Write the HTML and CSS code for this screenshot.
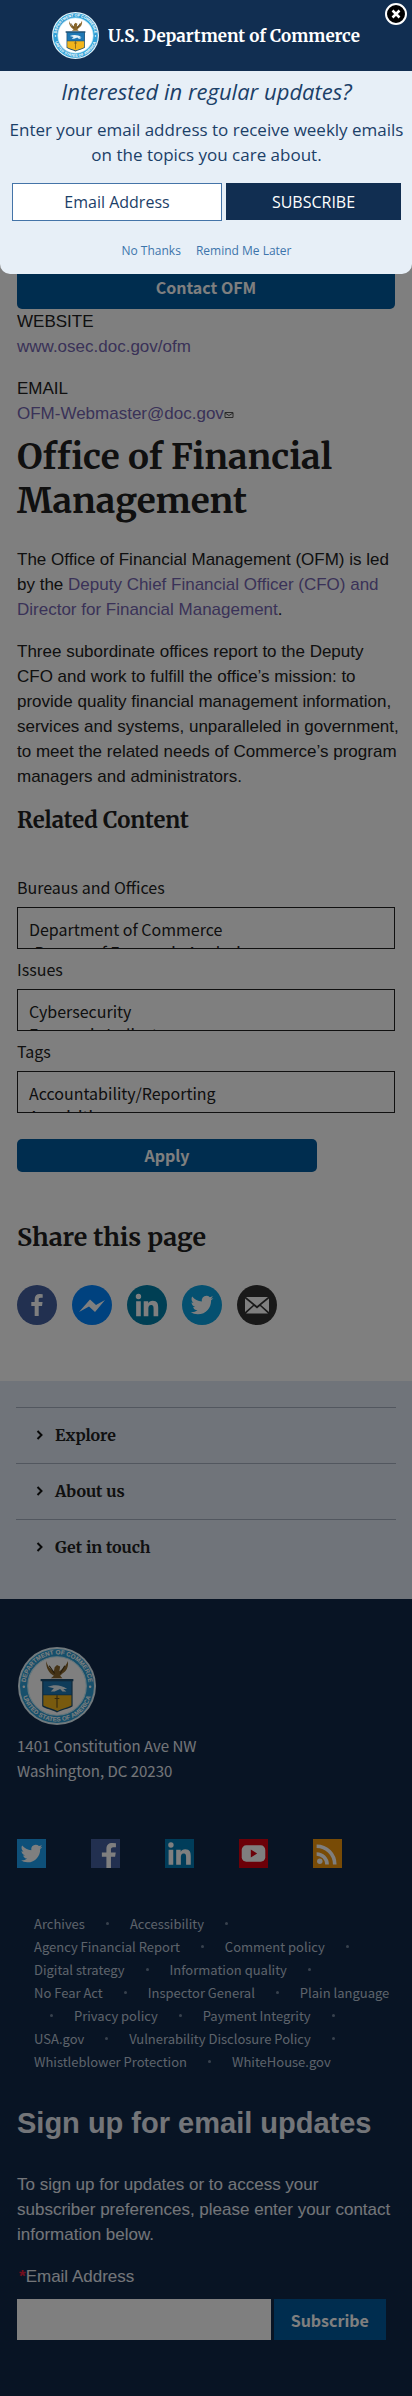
FILE: index.html
```html
<!DOCTYPE html>
<html lang="en">
<head>
<meta charset="utf-8">
<meta name="viewport" content="width=device-width, initial-scale=1">
<title>Office of Financial Management | U.S. Department of Commerce</title>
<link rel="stylesheet" href="styles.css">
</head>
<body>
<svg class="defs" aria-hidden="true">
  <defs>
    <path id="arc-top" d="M9.500 50a40.500 40.500 0 0 1 81 0"/>
    <path id="arc-bottom" d="M4.500 50a45.500 45.500 0 0 0 91 0"/>
    <symbol id="seal" viewBox="0 0 100 100">
      <circle cx="50" cy="50" r="50" fill="#e3f4fb"/>
      <circle cx="50" cy="50" r="47.500" fill="#2f9fd6"/>
      <circle cx="50" cy="50" r="37.500" fill="#fff" stroke="#c9ecf8" stroke-width="1.500"/>
      <text class="seal-text"><textPath href="#arc-top" startOffset="50%">DEPARTMENT OF COMMERCE</textPath></text>
      <text class="seal-text"><textPath href="#arc-bottom" startOffset="50%">UNITED STATES OF AMERICA</textPath></text>
      <circle cx="7.500" cy="51" r="1.600" fill="#fff"/><circle cx="92.500" cy="51" r="1.600" fill="#fff"/>
      <path d="M36 18c3 9 6 11 10 13l1-5 3-3 4 2-1 6c5-3 8-6 11-13 1 8-2 13-7 16l-3 3 3 3H42l4-3c-7-4-10-10-10-19z" fill="#8a672c"/>
      <path d="M40 24l7 10M60 24l-6 10" stroke="#4b3818" stroke-width="1.500"/>
      <path d="M29 41h42v3h-1v32c-5 4-14 4-20 8-6-4-15-4-19-8V44h-2z" fill="#1c4f73"/>
      <path d="M32.500 44h36v17h-36z" fill="#1f78b4"/>
      <path d="M32.500 62h36v13c-5 3-13 4-18 7-5-3-13-4-18-7z" fill="#f1b51c"/>
      <path d="M38 51c8-3 17-3 25 3h-5l4 3h-5l-3-3-7 3h-5l4-4z" fill="#e7f3f8"/>
      <path d="M50 62v16M47 66h6" stroke="#6d541d" stroke-width="1.500"/>
    </symbol>
    <symbol id="twitter" viewBox="0 0 32 32"><path d="M28 8.557a9.913 9.913 0 0 1-2.828.775 4.930 4.930 0 0 0 2.166-2.725 9.738 9.738 0 0 1-3.130 1.194 4.920 4.920 0 0 0-3.593-1.550 4.924 4.924 0 0 0-4.794 6.049c-4.090-.210-7.720-2.170-10.150-5.150a4.942 4.942 0 0 0-.665 2.477c0 1.710.870 3.214 2.190 4.100a4.968 4.968 0 0 1-2.230-.616v.060c0 2.390 1.700 4.380 3.952 4.830a5.051 5.051 0 0 1-2.224.084 4.935 4.935 0 0 0 4.600 3.420A9.893 9.893 0 0 1 4 23.540a13.940 13.940 0 0 0 7.548 2.212c9.057 0 14.010-7.507 14.010-14.013 0-.213-.005-.426-.015-.637.960-.695 1.795-1.560 2.455-2.550z"/></symbol>
    <symbol id="facebook" viewBox="0 0 32 32"><path d="M17.780 27.500V17.008h3.522l.527-4.090h-4.050v-2.610c0-1.182.330-1.990 2.023-1.990h2.166V4.660a29.320 29.320 0 0 0-3.155-.160c-3.123 0-5.260 1.905-5.260 5.405v3.016h-3.530v4.090h3.530V27.500h4.223z"/></symbol>
    <symbol id="linkedin" viewBox="0 0 32 32"><path d="M6.227 12.610h4.190v13.480h-4.190zM8.322 5.900a2.430 2.430 0 1 1 0 4.861 2.430 2.430 0 0 1 0-4.860M13.040 12.610h4.020v1.840h.058c.560-1.058 1.927-2.176 3.965-2.176 4.238 0 5.020 2.792 5.020 6.420v7.395h-4.183v-6.560c0-1.564-.030-3.574-2.178-3.574-2.180 0-2.514 1.700-2.514 3.460v6.668H13.040z"/></symbol>
    <symbol id="rss" viewBox="0 0 32 32"><circle cx="7.500" cy="24.500" r="3"/><path d="M4 16.500A11.500 11.500 0 0 1 15.500 28M4 8A20 20 0 0 1 24 28" fill="none" stroke="#fff" stroke-width="4"/></symbol>
  </defs>
</svg>

<div class="popup" role="dialog" aria-labelledby="popup-title">
  <header class="brand">
    <svg class="brand-seal" role="img" aria-label="Department seal"><use href="#seal"/></svg>
    <span class="brand-name">U.S. Department of Commerce</span>
    <button class="close" type="button" aria-label="Close"><svg viewBox="0 0 10 10"><path d="M1.500 1.500l7 7M8.500 1.500l-7 7"/></svg></button>
  </header>
  <form class="offer">
    <h2 id="popup-title" class="offer-title">Interested in regular updates?</h2>
    <p class="offer-text">Enter your email address to receive weekly emails on the topics you care about.</p>
    <div class="offer-row">
      <input class="offer-input" type="email" placeholder="Email Address" aria-label="Email Address">
      <button class="offer-submit" type="submit">SUBSCRIBE</button>
    </div>
    <div class="offer-links"><a href="#">No Thanks</a><a href="#">Remind Me Later</a></div>
  </form>
</div>

<div class="page">
  <main class="main">
    <a class="button contact" href="#">Contact OFM</a>
    <div class="details">
      <p>WEBSITE<br><a href="#">www.osec.doc.gov/ofm</a></p>
      <p>EMAIL<br><a href="#">OFM-Webmaster@doc.gov<svg class="mail" viewBox="0 0 10 8" aria-hidden="true"><path d="M1 1.500h8v5H1zM1 2l4 2.500L9 2"/></svg></a></p>
    </div>
    <h1 class="title">Office of Financial Management</h1>
    <div class="copy">
      <p>The Office of Financial Management (OFM) is led by the <a href="#">Deputy Chief Financial Officer (CFO) and Director for Financial Management</a>.</p>
      <p>Three subordinate offices report to the Deputy CFO and work to fulfill the office’s mission: to provide quality financial management information, services and systems, unparalleled in government, to meet the related needs of Commerce’s program managers and administrators.</p>
    </div>
    <h2 class="related">Related Content</h2>
    <form class="filters">
      <label for="bureaus">Bureaus and Offices</label>
      <select id="bureaus" multiple>
        <option>Department of Commerce</option>
        <option>-Bureau of Economic Analysis</option>
      </select>
      <label for="issues">Issues</label>
      <select id="issues" multiple>
        <option>Cybersecurity</option>
        <option>Economic Indicators</option>
      </select>
      <label for="tags">Tags</label>
      <select id="tags" multiple>
        <option>Accountability/Reporting</option>
        <option>Acquisition</option>
      </select>
      <button class="button apply" type="submit">Apply</button>
    </form>
    <h2 class="share-title">Share this page</h2>
    <div class="share">
      <a class="facebook" href="#" aria-label="Facebook"><svg viewBox="-5 -5 42 42"><use href="#facebook" width="32" height="32"/></svg></a>
      <a class="messenger" href="#" aria-label="Messenger"><svg viewBox="0 0 40 40"><path d="M7 27l11-12.500 6 5.500 9-5-10 12-6-5.500z"/></svg></a>
      <a class="linkedin" href="#" aria-label="LinkedIn"><svg viewBox="-2 -2 36 36"><use href="#linkedin" width="32" height="32"/></svg></a>
      <a class="twitter" href="#" aria-label="Twitter"><svg viewBox="-5 -5 42 42"><use href="#twitter" width="32" height="32"/></svg></a>
      <a class="email" href="#" aria-label="Email"><svg viewBox="0 0 40 40"><path d="M9 12h22l-11 9zM8 13.500l8 6.500-8 7zM32 13.500L24 20l8 7zM17 21l3 2.500 3-2.500 8 7.500H9z"/></svg></a>
    </div>
  </main>

  <nav class="sections" aria-label="Sections">
    <a href="#"><svg viewBox="0 0 8 12"><path d="M1.500 2l4 4-4 4"/></svg>Explore</a>
    <a href="#"><svg viewBox="0 0 8 12"><path d="M1.500 2l4 4-4 4"/></svg>About us</a>
    <a href="#"><svg viewBox="0 0 8 12"><path d="M1.500 2l4 4-4 4"/></svg>Get in touch</a>
  </nav>

  <footer class="footer">
    <svg class="footer-seal" role="img" aria-label="Department seal"><use href="#seal"/></svg>
    <address>1401 Constitution Ave NW<br>Washington, DC 20230</address>
    <div class="social">
      <a class="twitter" href="#" aria-label="Twitter"><svg viewBox="0 0 32 32"><use href="#twitter" width="32" height="32"/></svg></a>
      <a class="facebook" href="#" aria-label="Facebook"><svg viewBox="0 0 32 32"><path d="M17 32V19.500h-5v-4.500h5v-4c0-4.500 2.500-6.500 6.500-6.500l4 .3v4.200h-2.800c-2.200 0-2.700 1-2.700 2.600V15h5.300l-.7 4.500h-4.600V32z"/></svg></a>
      <a class="linkedin" href="#" aria-label="LinkedIn"><svg viewBox="3 3 26 26"><use href="#linkedin" width="32" height="32"/></svg></a>
      <a class="youtube" href="#" aria-label="YouTube"><svg viewBox="0 0 32 32"><rect x="3" y="7" width="26" height="18" rx="5"/><path d="M13 11.500l7 4.500-7 4.500z" fill="#d80010"/></svg></a>
      <a class="rss" href="#" aria-label="RSS"><svg viewBox="0 0 32 32"><use href="#rss" width="32" height="32"/></svg></a>
    </div>
    <nav class="legal" aria-label="Policies">
      <div><a href="#">Archives</a><i></i><a href="#">Accessibility</a><i></i></div>
      <div><a href="#">Agency Financial Report</a><i></i><a href="#">Comment policy</a><i></i></div>
      <div><a href="#">Digital strategy</a><i></i><a href="#">Information quality</a><i></i></div>
      <div><a href="#">No Fear Act</a><i></i><a href="#">Inspector General</a><i></i><a href="#">Plain language</a></div>
      <div class="continued"><i></i><a href="#">Privacy policy</a><i></i><a href="#">Payment Integrity</a><i></i></div>
      <div><a href="#">USA.gov</a><i></i><a href="#">Vulnerability Disclosure Policy</a><i></i></div>
      <div><a href="#">Whistleblower Protection</a><i></i><a href="#">WhiteHouse.gov</a></div>
    </nav>
    <form class="signup">
      <h2>Sign up for email updates</h2>
      <p>To sign up for updates or to access your subscriber preferences, please enter your contact information below.</p>
      <label for="signup-email"><span>*</span>Email Address</label>
      <div class="signup-row">
        <input id="signup-email" type="email">
        <button type="submit">Subscribe</button>
      </div>
    </form>
  </footer>
  <div class="shade"></div>
</div>
</body>
</html>
```
FILE: styles.css
```css
:root {
  --sans: "Liberation Sans", Arial, sans-serif;
  --ui: "Source Sans Pro", "Noto Sans CJK SC", sans-serif;
  --serif: Merriweather, "DejaVu Serif Condensed", "DejaVu Serif", serif;
  --open: "Open Sans", sans-serif;
}
* { box-sizing: border-box; }
body { margin: 0; background: #808080; font: 17px/25px var(--sans); color: #212121; }
h1, h2, p { margin: 0; }
a { text-decoration: none; color: #7465b0; }
button, input, select { margin: 0; border: 0; border-radius: 0; }
svg { display: block; }
.defs { position: absolute; width: 0; height: 0; }
.seal-text { font: bold 8px var(--sans); fill: #fff; text-anchor: middle; }

/* Subscription dialog */
.popup { position: absolute; z-index: 2; top: 0; left: 0; right: 0; border-radius: 0 0 10px 10px; overflow: hidden; background: #e7eff7; }
.brand { position: relative; display: flex; align-items: center; justify-content: center; gap: 9px; height: 71px; background: #112e51; }
.brand-seal { width: 47px; height: 47px; }
.brand-name { font: bold 17px/24px var(--serif); color: #fff; }
.close { position: absolute; top: 3px; right: 5px; display: grid; place-items: center; width: 22px; height: 22px; padding: 0; border: 2px solid #fff; border-radius: 50%; background: #000; }
.close svg { width: 10px; height: 10px; stroke: #fff; stroke-width: 2.5; }
.offer { padding: 4px 11px 11px 12px; font-family: var(--open); color: #1b4068; text-align: center; }
.offer-title { font: italic 22px/32px var(--open); }
.offer-text { margin: 0 -6px; padding-top: 10px; font-size: 17px; line-height: 25px; }
.offer-row { display: grid; grid-template-columns: 210fr 175fr; gap: 4px; margin-top: 16px; }
.offer-input { min-width: 0; height: 38px; border: 1px solid #4474a8; background: #fff; font: 16px/22px var(--open); text-align: center; }
.offer-input::placeholder { color: #1b4068; opacity: 1; }
.offer-submit { height: 37px; background: #112e51; color: #fff; font: 16px/22px var(--open); }
.offer-links { display: flex; justify-content: center; gap: 15px; margin-top: 18px; font-size: 12px; line-height: 24px; }
.offer-links a { color: #3d75ab; }

/* Page beneath the dialog */
.page { position: relative; background: #fff; }
.shade { position: absolute; inset: 0; background: rgba(0, 0, 0, .5); }
.main { padding: 259px 17px 56px; }
.button { display: block; border-radius: 5px; background: #005a9e; color: #fff; font: bold 16px/24px var(--ui); text-align: center; }
.contact { padding: 16px 0 10px; }
.details { display: grid; gap: 17px; }
.mail { display: inline-block; width: 10px; height: 8px; fill: none; stroke: #555; }
.title { padding-top: 9px; font: bold 35px/44px var(--serif); }
.copy { display: grid; gap: 17px; margin: 24px -4px 0 0; }
.related { padding-top: 16px; font: bold 22px/30px var(--serif); }
.filters { display: grid; padding-top: 40px; font: 16px/24px var(--ui); }
.filters label { padding-bottom: 8px; }
.filters select { appearance: none; width: 100%; height: 42px; margin-bottom: 8px; padding: 9px 8px 0 11px; border: 1px solid #212121; background: #fff; color: #212121; font: 16px/22px var(--ui); overflow: hidden; }
.filters option { padding: 0; min-height: 23px; height: 23px; line-height: 22px; }
.apply { width: 300px; max-width: 100%; height: 33px; margin-top: 18px; padding: 0 0 2px; }
.share-title { padding-top: 47px; font: bold 25px/36px var(--serif); }
.share { display: flex; gap: 15px; padding-top: 30px; }
.share a { width: 40px; height: 40px; border-radius: 50%; }
.share svg, .social svg { width: 100%; height: 100%; fill: #fff; }
.facebook { background: #4460a0; }
.messenger { background: #0084ff; }
.linkedin { background: #007bb5; }
.twitter { background: #1da1f2; }
.share .twitter { background: #08a0e0; }
.share .linkedin { background: #007ea8; }
.email { background: #333; }
.youtube { background: #d80010; }
.rss { background: #f0960c; }

.sections { padding: 26px 16px 24px; background: #e1e9f4; }
.sections a { display: flex; align-items: center; gap: 11px; height: 56px; padding: 0 0 2px 20px; border-top: 1px solid #a4afbe; color: #212121; font: bold 16px/24px var(--serif); }
.sections svg { width: 8px; height: 12px; fill: none; stroke: #111; stroke-width: 2; }

.footer { padding: 48px 17px 56px; background: #112849; color: #e6ebf2; }
.footer-seal { width: 78px; height: 78px; margin-left: 1px; }
.footer address { padding-top: 8px; font: 15px/25px var(--ui); }
.social { display: flex; gap: 45px; padding-top: 56px; }
.social a { width: 29px; height: 29px; }
.legal { padding: 44px 0 0 17px; font: 13px/23px var(--ui); }
.legal div { display: flex; align-items: center; gap: 21px; white-space: nowrap; }
.legal .continued { padding-left: 16px; }
.legal a { color: #bac6d6; }
.legal i { flex: none; width: 3px; height: 3px; border-radius: 50%; background: #71839b; }
.signup h2 { padding-top: 29px; font: bold 29px/42px var(--sans); }
.signup p { padding-top: 28px; }
.signup label { display: block; padding: 17px 0 10px 2px; }
.signup span { color: #e31c3d; font-weight: bold; }
.signup-row { display: flex; gap: 3px; padding-right: 9px; }
.signup input { flex: 253; min-width: 0; height: 41px; background: #fff; }
.signup button { flex: 114; height: 41px; padding: 0; background: #005a9e; color: #fff; font: bold 16px/24px var(--ui); }
```
